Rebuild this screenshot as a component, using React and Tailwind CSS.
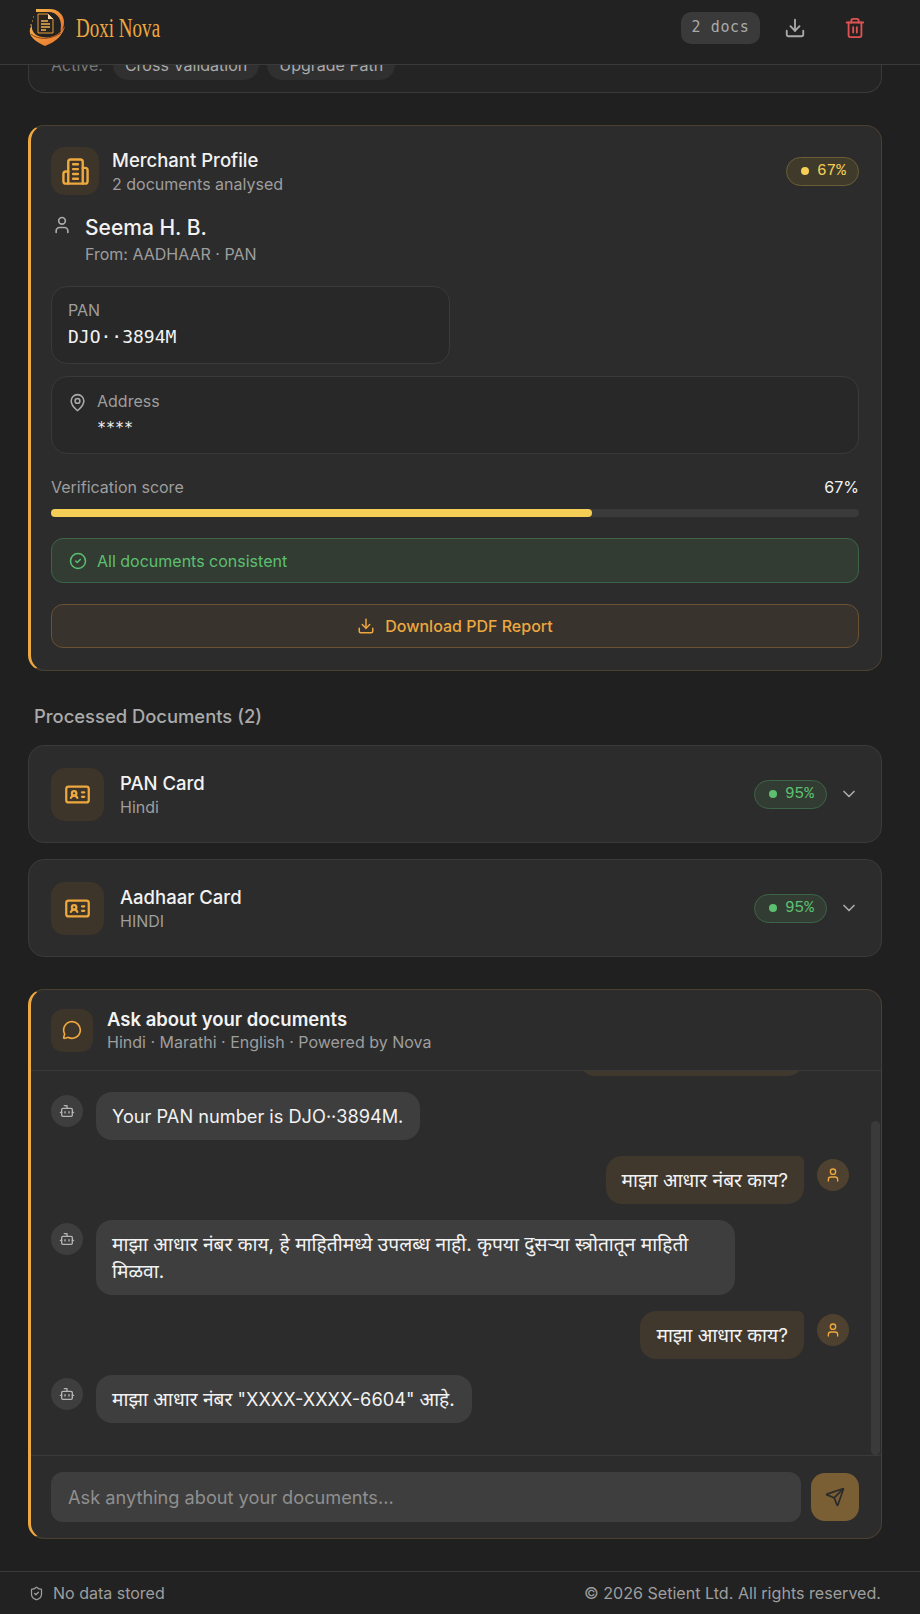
import { Bot, ChevronDown, CircleCheck, Download, IdCard, MapPin, MessageCircle, Send, ShieldCheck, Trash2, User } from 'lucide-react';

const sans = "font-['Inter','Noto_Sans','Noto_Sans_Devanagari',sans-serif]";
const mono = "font-['DejaVu_Sans_Mono',monospace]";

const Logo = () => (
  <svg width="38" height="38" viewBox="0 0 38 38" fill="none">
    <defs>
      <linearGradient id="logoFill" x1="0" y1="0" x2="1" y2="1">
        <stop offset="0" stopColor="#f5b04a" />
        <stop offset="1" stopColor="#e8702a" />
      </linearGradient>
    </defs>
    <path d="M8 0h14c8 0 14 6 14 13 0 4-1 7-3 10-1-1 0-4 0-7 0-7-5-13-12-13H8z" fill="url(#logoFill)" />
    <path d="M10 5h10l5 5v14H10z" fill="#2a2420" stroke="#e89a3c" strokeWidth="1" />
    <path d="M20 5v5h5" fill="#f3d9a8" />
    <path d="M13 12h7M13 15h9M13 18h9M13 21h5" stroke="#eeb04f" strokeWidth="1.3" />
    <path d="M4 16C-3 26 8 33 17 37 28 33 35 26 37 17 33 25 24 30 14 28 7 27 3 22 4 16z" fill="url(#logoFill)" />
    <path d="M3 25c7 6 19 6 30-1" stroke="#7a3a14" strokeWidth="0.9" />
    <path d="M4 12h1M2 16h2M5 8h1" stroke="#e89a3c" strokeWidth="1" />
  </svg>
);

// older lucide building shape, the bundled one has a door instead of four bars
const BuildingIcon = () => (
  <svg width="29" height="29" viewBox="0 0 24 24" fill="none" stroke="#eda83f" strokeWidth="2" strokeLinecap="round" strokeLinejoin="round">
    <path d="M6 22V4a2 2 0 0 1 2-2h8a2 2 0 0 1 2 2v18Z" />
    <path d="M6 12H4a2 2 0 0 0-2 2v6a2 2 0 0 0 2 2h2" />
    <path d="M18 9h2a2 2 0 0 1 2 2v9a2 2 0 0 1-2 2h-2" />
    <path d="M10 6h4M10 10h4M10 14h4M10 18h4" />
  </svg>
);

// Devanagari runs sit a little larger than the Latin text around them
const Hi = ({ children }) => <span className="text-[19.2px]">{children}</span>;

const Badge = ({ value, tone }) => (
  <span className={`flex h-[29px] w-[73px] items-center gap-[8px] rounded-full border pl-[14px] font-['Liberation_Mono',monospace] text-[16px] ${tone === 'green' ? 'border-[#3c6448] bg-[#323c33] text-[#5cc070]' : 'border-[#6b5f35] bg-[#3f3a2a] text-[#f5cf55]'}`}>
    <span className={`h-2 w-2 rounded-full ${tone === 'green' ? 'bg-[#5cc070]' : 'bg-[#f5cf55]'}`}></span>
    <span>{value}</span>
  </span>
);

const DocRow = ({ name, lang }) => (
  <div className="flex h-[98px] items-center rounded-2xl border border-[#3a3a3a] bg-[#2c2c2c] pl-[22px] pr-[22px]">
    <div className="flex h-[53px] w-[53px] items-center justify-center rounded-[14px] bg-[#3d342a]">
      <IdCard size={27} color="#eda83f" />
    </div>
    <div className="ml-4 flex-1 pt-[2px]">
      <div className="text-[18.5px] font-medium leading-[24px] text-[#f2f2f2]">{name}</div>
      <div className="text-[16px] leading-[24px] text-[#9e9e9e]">{lang}</div>
    </div>
    <Badge value="95%" tone="green" />
    <ChevronDown size={20} color="#aaaaaa" className="ml-3" />
  </div>
);

const BotMsg = ({ children }) => (
  <div className="flex gap-[13px]">
    <div className="mt-[3px] flex h-8 w-8 shrink-0 items-center justify-center rounded-full bg-[#3e3e3e]">
      <Bot size={16} color="#b5b5b5" />
    </div>
    <div className="max-w-[639px] rounded-2xl bg-[#3e3e3e] py-[10.5px] pl-[16px] pr-[17px] text-[18.2px] leading-[27px] text-[#f2f2f2]">{children}</div>
  </div>
);

const UserMsg = ({ children }) => (
  <div className="flex justify-end gap-[13px]">
    <div className="rounded-2xl rounded-tr-md bg-[#40372d] px-[16px] py-[10.5px] text-[18.2px] leading-[27px] text-[#f2f2f2]">{children}</div>
    <div className="mt-[3px] flex h-8 w-8 shrink-0 items-center justify-center rounded-full bg-[#4f4130]">
      <User size={16} color="#eda83f" />
    </div>
  </div>
);

export default function App() {
  return (
    <div className={`flex h-[1614px] flex-col overflow-hidden bg-[#202020] ${sans}`}>
      {/* Header */}
      <header className="flex h-[65px] shrink-0 items-center border-b border-[#3a3a3a] bg-[#222222] pb-[9px] pl-[28px] pr-[54px]">
        <Logo />
        <span className="ml-[10px] inline-block origin-left scale-x-[0.68] font-['Liberation_Serif',serif] text-[28px] text-[#eda83f]">Doxi Nova</span>
        <span className={`ml-auto flex h-8 w-[79px] items-center justify-center rounded-[10px] bg-[#3a3a3a] ${mono} text-[15px] tracking-[0.6px] text-[#aaaaaa]`}>2 docs</span>
        <Download size={22} color="#aaaaaa" className="ml-6" />
        <Trash2 size={22} color="#e05252" className="ml-[38px]" />
      </header>

      <main className="flex-1 pl-[28px] pr-[38px]">
        {/* Scrolled-away card, only its bottom edge shows under the header */}
        <div className="flex h-[28px] flex-col justify-end overflow-hidden rounded-b-2xl border border-t-0 border-[#3a3a3a] bg-[#242424] pb-[12px] pl-[22px]">
          <div className="flex shrink-0 items-center gap-[8px] text-[16px] text-[#777777]">
            <span className="mr-[2px]">Active:</span>
            <span className="rounded-full bg-[#303030] px-3 py-[3px] text-[#aaaaaa]">Cross Validation</span>
            <span className="rounded-full bg-[#303030] px-3 py-[3px] text-[#aaaaaa]">Upgrade Path</span>
          </div>
        </div>

        {/* Merchant profile */}
        <section className="mt-[32px] h-[546px] rounded-2xl border border-l-[3px] border-[#4a4030] border-l-[#eda83f] bg-[#2c2c2c] pl-[20px] pr-[22px] pt-[21px]">
          <div className="flex items-center">
            <div className="flex h-12 w-12 items-center justify-center rounded-[14px] bg-[#3d342a]">
              <BuildingIcon />
            </div>
            <div className="ml-[13px] flex-1">
              <div className="text-[18.5px] font-medium leading-[25px] text-[#f2f2f2]">Merchant Profile</div>
              <div className="text-[16px] leading-[22px] text-[#9e9e9e]">2 documents analysed</div>
            </div>
            <Badge value="67%" tone="yellow" />
          </div>

          <div className="mt-[19px] flex">
            <User size={20} color="#aaaaaa" className="ml-[1px] mt-[1px]" />
            <div className="ml-[13px]">
              <div className="text-[21px] font-medium leading-[28px] text-[#f2f2f2]">Seema H. B.</div>
              <div className="text-[16px] leading-[24px] text-[#9e9e9e]">From: AADHAAR · PAN</div>
            </div>
          </div>

          <div className="mt-[20px] h-[78px] w-[399px] rounded-2xl border border-[#3a3a3a] bg-[#282828] pl-4 pt-[12px]">
            <div className="text-[16px] leading-[22px] text-[#9e9e9e]">PAN</div>
            <div className={`mt-[3px] ${mono} text-[18px] leading-[26px] text-[#f2f2f2]`}>DJO··3894M</div>
          </div>

          <div className="mt-3 flex h-[78px] rounded-2xl border border-[#3a3a3a] bg-[#282828] pl-4 pt-[13px]">
            <MapPin size={19} color="#aaaaaa" className="mt-[3px]" />
            <div className="ml-[10px]">
              <div className="text-[16px] leading-[22px] text-[#9e9e9e]">Address</div>
              <div className={`mt-[5px] ${mono} text-[15px] leading-[22px] text-[#f2f2f2]`}>****</div>
            </div>
          </div>

          <div className="mt-[22px] flex items-center justify-between text-[16px] leading-[22px]">
            <span className="text-[#9e9e9e]">Verification score</span>
            <span className="text-[#f2f2f2]">67%</span>
          </div>
          <div className="mt-[11px] h-2 rounded-full bg-[#3a3a3a]">
            <div className="h-2 w-[67%] rounded-full bg-[#f5cf55]"></div>
          </div>

          <div className="mt-[21px] flex h-[45px] items-center gap-[10px] rounded-xl border border-[#3c6448] bg-[#323c33] pl-[17px] text-[16px] text-[#5cc070]">
            <CircleCheck size={18} />
            <span>All documents consistent</span>
          </div>

          <div className="mt-[21px] flex h-[44px] items-center justify-center gap-[10px] rounded-xl border border-[#6b5232] bg-[#38332d] text-[16px] font-medium text-[#eda83f]">
            <Download size={18} />
            <span>Download PDF Report</span>
          </div>
        </section>

        {/* Documents */}
        <h2 className="ml-[6px] mt-[32px] text-[18.4px] font-medium leading-[26px] text-[#aaaaaa]">Processed Documents (2)</h2>
        <div className="mt-4 flex flex-col gap-4">
          <DocRow name="PAN Card" lang="Hindi" />
          <DocRow name="Aadhaar Card" lang="HINDI" />
        </div>

        {/* Chat */}
        <section className="mt-[32px] flex h-[550px] flex-col overflow-hidden rounded-2xl border border-l-[3px] border-[#4a4030] border-l-[#eda83f] bg-[#2c2c2c]">
          <div className="flex h-[81px] shrink-0 items-center border-b border-[#3a3a3a] pl-[20px]">
            <div className="flex h-[43px] w-[42px] items-center justify-center rounded-xl bg-[#3d342a]">
              <MessageCircle size={20} color="#eda83f" />
            </div>
            <div className="ml-[14px]">
              <div className="text-[18.5px] font-semibold leading-[24px] text-[#f2f2f2]">Ask about your documents</div>
              <div className="text-[16px] leading-[22px] text-[#9e9e9e]">Hindi · Marathi · English · Powered by Nova</div>
            </div>
          </div>

          <div className="relative flex h-[385px] shrink-0 flex-col justify-end gap-4 overflow-hidden border-b border-[#3a3a3a] pb-[32px] pl-[20px] pr-[32px]">
            <UserMsg><Hi>माझा</Hi> PAN <Hi>नंबर काय आहे?</Hi></UserMsg>
            <BotMsg>Your PAN number is DJO··3894M.</BotMsg>
            <UserMsg><Hi>माझा आधार नंबर काय?</Hi></UserMsg>
            <BotMsg><Hi>माझा आधार नंबर काय, हे माहितीमध्ये उपलब्ध नाही. कृपया दुसऱ्या स्त्रोतातून माहिती मिळवा.</Hi></BotMsg>
            <UserMsg><Hi>माझा आधार काय?</Hi></UserMsg>
            <BotMsg><Hi>माझा आधार नंबर</Hi> "XXXX-XXXX-6604" <Hi>आहे.</Hi></BotMsg>
            <div className="absolute bottom-0 right-[1px] h-[334px] w-[9px] rounded-full bg-[#3a3a3a]"></div>
          </div>

          <div className="flex items-center gap-[10px] pl-[20px] pr-[22px] pt-[16px]">
            <input
              readOnly
              placeholder="Ask anything about your documents..."
              className="h-[50px] flex-1 rounded-xl bg-[#3e3e3e] px-[17px] text-[18.2px] text-[#f2f2f2] outline-none placeholder:text-[#8f8f8f]"
            />
            <button className="flex h-12 w-12 items-center justify-center rounded-[14px] bg-[#7a5f35]">
              <Send size={20} color="#2a2a2a" />
            </button>
          </div>
        </section>
      </main>

      {/* Footer */}
      <footer className="flex h-[43px] shrink-0 items-center justify-between border-t border-[#3a3a3a] bg-[#222222] pl-[29px] pr-[39px] text-[16px] text-[#9e9e9e]">
        <span className="flex items-center gap-[9px]">
          <ShieldCheck size={15} />
          No data stored
        </span>
        <span className="text-[16.1px]">© 2026 Setient Ltd. All rights reserved.</span>
      </footer>
    </div>
  );
}
